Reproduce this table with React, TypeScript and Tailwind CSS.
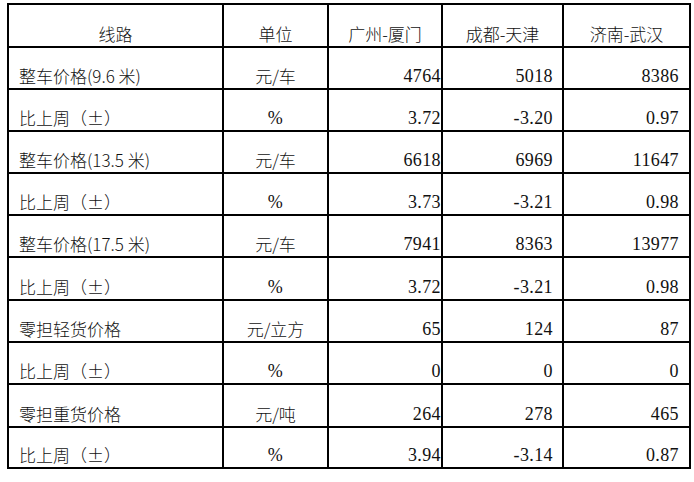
const ROWS = [
  { label: '整车价格(9.6 米)', unit: '元/车', vals: ['4764', '5018', '8386'], h: 'h-[42px]' },
  { label: '比上周（±）', unit: '%', vals: ['3.72', '-3.20', '0.97'], h: 'h-[42px]' },
  { label: '整车价格(13.5 米)', unit: '元/车', vals: ['6618', '6969', '11647'], h: 'h-[42px]' },
  { label: '比上周（±）', unit: '%', vals: ['3.73', '-3.21', '0.98'], h: 'h-[42px]' },
  { label: '整车价格(17.5 米)', unit: '元/车', vals: ['7941', '8363', '13977'], h: 'h-[42px]' },
  { label: '比上周（±）', unit: '%', vals: ['3.72', '-3.21', '0.98'], h: 'h-[43px]' },
  { label: '零担轻货价格', unit: '元/立方', vals: ['65', '124', '87'], h: 'h-[42px]' },
  { label: '比上周（±）', unit: '%', vals: ['0', '0', '0'], h: 'h-[42px]' },
  { label: '零担重货价格', unit: '元/吨', vals: ['264', '278', '465'], h: 'h-[43px]' },
  { label: '比上周（±）', unit: '%', vals: ['3.94', '-3.14', '0.87'], h: 'h-[41px]' },
];

const cjk = "font-['Noto_Sans_CJK_SC',sans-serif] text-[17px] font-light";
const serif = "font-['Liberation_Serif','Times_New_Roman',serif] text-[18px] tracking-[0.4px]";
const cell = 'border-2 border-black align-bottom leading-[20px] pb-[2px] p-0';

export default function App() {
  return (
    <div className="w-[694px] h-[482px] bg-white pl-[7px] pt-[3px]">
      <table className="table-fixed border-collapse text-[#111] w-[682px]">
        <colgroup>
          <col className="w-[215px]" />
          <col className="w-[105px]" />
          <col className="w-[114px]" />
          <col className="w-[121px]" />
          <col className="w-[127px]" />
        </colgroup>
        <thead>
          <tr className="h-[43px]">
            <th className={`${cell} ${cjk} text-center`}>线路</th>
            <th className={`${cell} ${cjk} text-center`}>单位</th>
            <th className={`${cell} ${cjk} text-center`}>广州-厦门</th>
            <th className={`${cell} ${cjk} text-center`}>成都-天津</th>
            <th className={`${cell} ${cjk} text-center`}>济南-武汉</th>
          </tr>
        </thead>
        <tbody>
          {ROWS.map((r, i) => (
            <tr key={i} className={r.h}>
              <td className={`${cell} ${cjk} pl-[10px]`}>{r.label}</td>
              <td className={`${cell} text-center ${r.unit === '%' ? serif : cjk}`}>{r.unit}</td>
              <td className={`${cell} ${serif} text-right pr-0`}>{r.vals[0]}</td>
              <td className={`${cell} ${serif} text-right pr-[9px]`}>{r.vals[1]}</td>
              <td className={`${cell} ${serif} text-right pr-[10px]`}>{r.vals[2]}</td>
            </tr>
          ))}
        </tbody>
      </table>
    </div>
  );
}
